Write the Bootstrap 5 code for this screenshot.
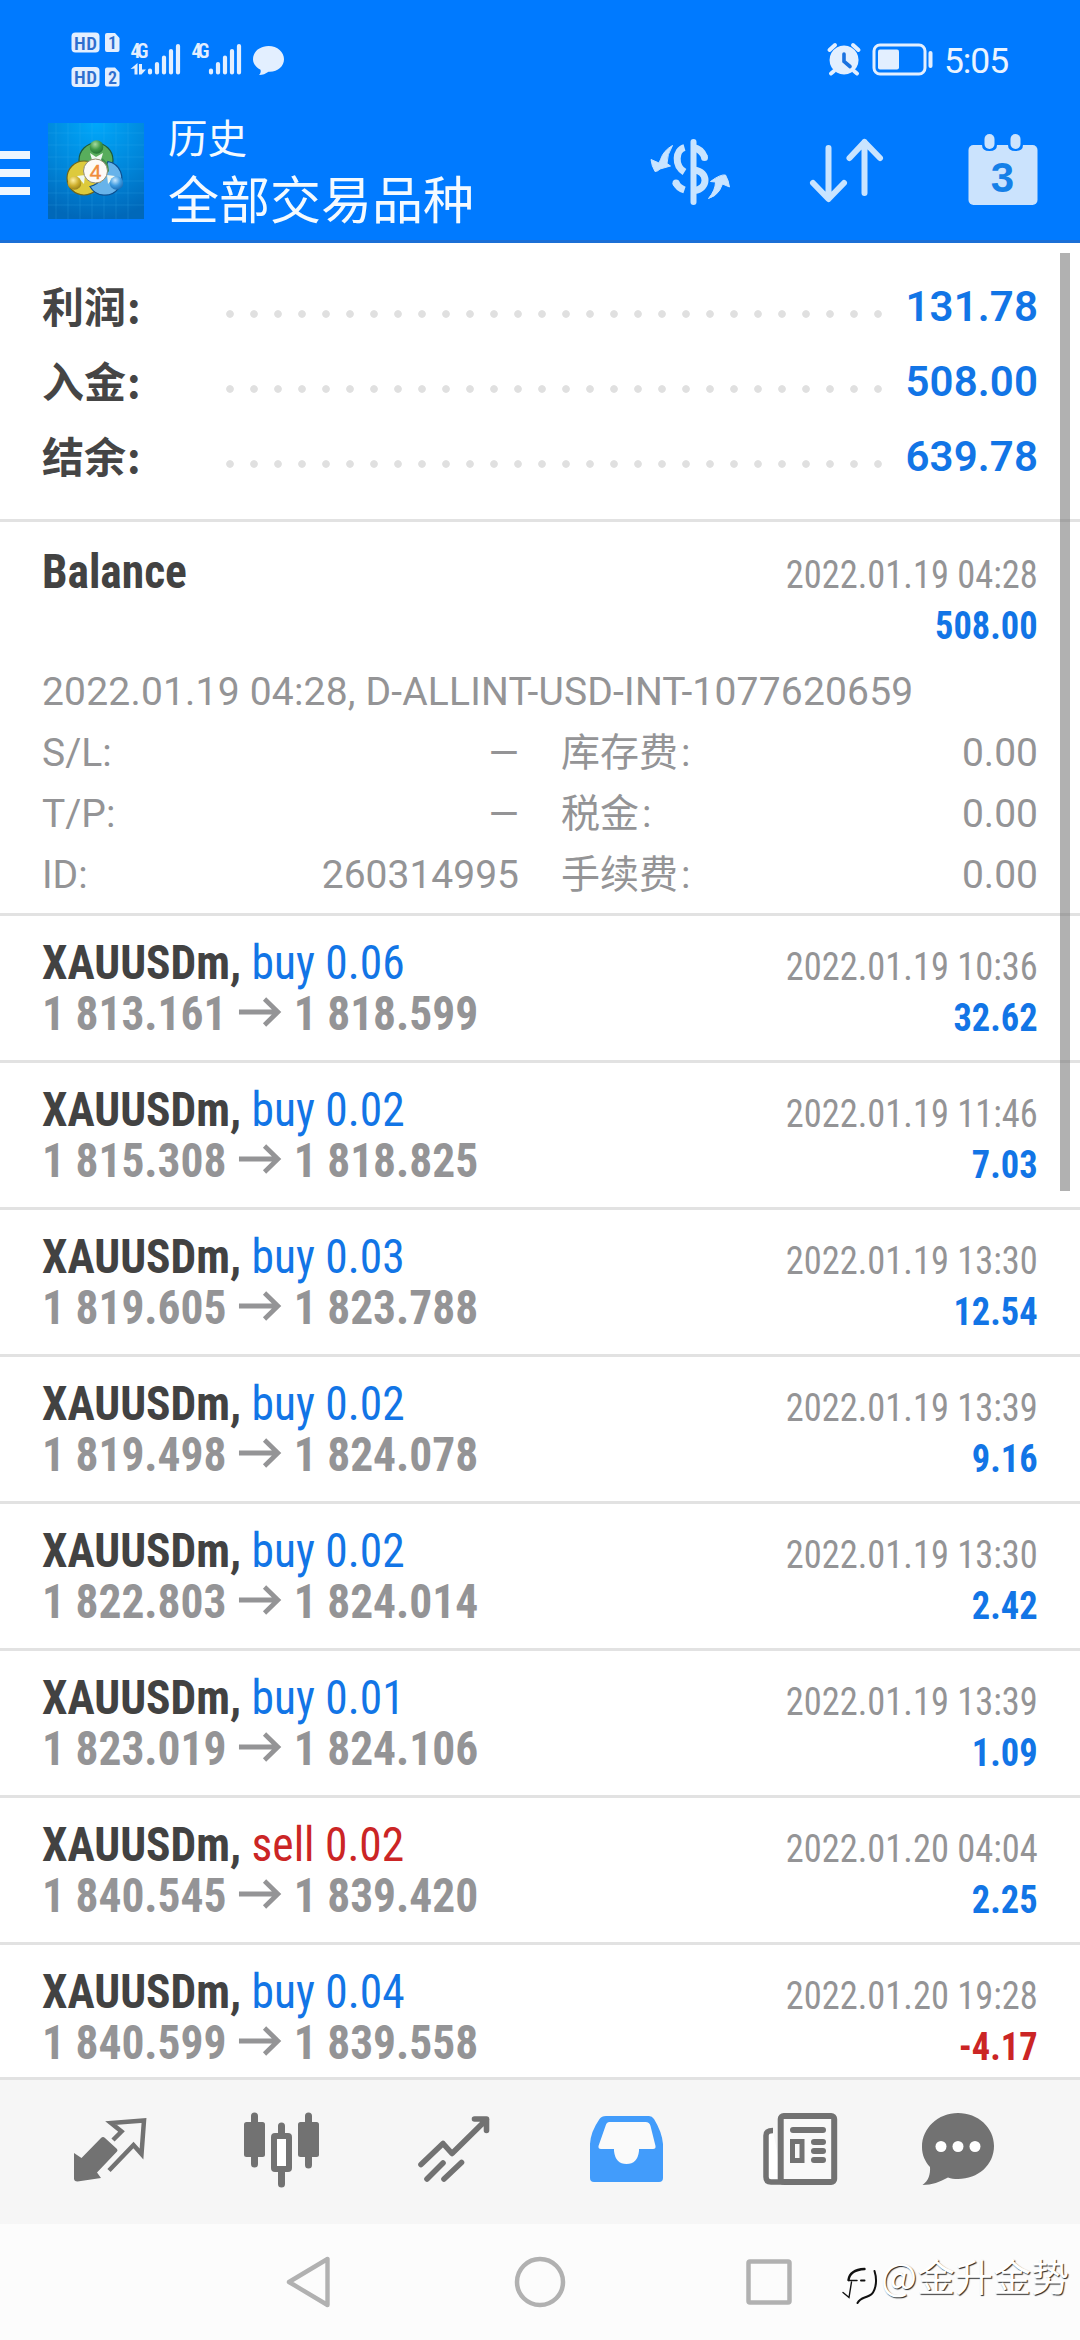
<!DOCTYPE html>
<html lang="zh-CN">
<head>
<meta charset="utf-8">
<meta name="viewport" content="width=device-width, initial-scale=1">
<title>历史</title>
<link href="https://cdn.jsdelivr.net/npm/bootstrap@5.3.0/dist/css/bootstrap.min.css" rel="stylesheet">
<style>
  body { font-family: Roboto, "Noto Sans CJK SC", sans-serif; color: #424242; background: #fff; }
  .screen { width: 1080px; height: 2340px; overflow: hidden; position: relative; }
  svg { display: block; overflow: visible; flex: none; }

  .top-area { background: #007aff; border-bottom: 3px solid #1b6fd6; height: 243px; }
  .status-row { height: 90px; padding: 0 72px 0 70px; }
  .clock-text { font-size: 35.5px; padding-top: 16px; height: 90px; line-height: 90px; letter-spacing: -1.1px; color: #eaf4ff; }
  .app-row { height: 150px; }
  .titles { font-family: "Noto Sans CJK SC", sans-serif; padding: 21px 0 0 24px; color: #f4faff; }
  .title-a { font-size: 39.5px; line-height: 50px; }
  .title-b { font-size: 51px; line-height: 72px; }
  .tools { padding-right: 42px; }

  .history { overflow: hidden; }
  .rule { border-bottom: 3px solid #e2e2e2; }
  .totals { height: 279px; padding: 26px 42px 0; }
  .total-line { height: 75px; }
  .total-label { width: 176px; font: 700 42px/71px "Noto Sans CJK SC", sans-serif; color: #454545; }
  .colon { margin-left: 3px; }
  .total-label .colon { margin-left: 1px; }
  .leader { width: 672px; height: 8px; margin-top: 41px; background: radial-gradient(circle at 12px 4px, #e0e0e0 3.4px, transparent 4.2px) 0 0 / 24px 8px repeat-x; }
  .total-value { font-size: 42px; line-height: 75px; font-weight: 600; letter-spacing: .1px; }
  .up { color: #1275e6; }
  .down { color: #cb2525; }
  .dim { color: #949496; }

  .cond { font-family: "Roboto Condensed", Roboto, sans-serif; white-space: nowrap; }
  .deal { height: 147px; padding: 22.3px 42px 0; }
  .from-left { transform: scaleX(.947); transform-origin: left; font-size: 48px; line-height: 50.5px; }
  .from-right { transform: scaleX(.934); transform-origin: right; font-size: 39px; line-height: 51px; margin-top: 3.4px; }
  .arrow-mark { display: inline-block; margin: -6px 14px 6px 13px; }

  .balance { height: 394px; padding: 24.6px 42px 0; }
  .facts { font-size: 39px; line-height: 61px; padding-top: 10px; white-space: nowrap; }
  .fact-left { width: 477px; }
  .fact-right { width: 477px; }
  .note-line { letter-spacing: .19px; }

  .tabs { height: 147px; background: #f6f6f6; border-top: 3px solid #e2e2e2; padding-left: 71px; gap: 99px; }
  .tab-last { margin-left: -16px; }
  .sysnav { height: 116px; background: #fcfcfc; padding-left: 285px; gap: 180px; }
  .thumb { position: absolute; left: 1060px; top: 253px; width: 10px; height: 938px; background: rgba(110,110,110,.54); }
  .sign { position: absolute; left: 842px; top: 2253px; color: #fff; font: 400 38px/44px "Noto Sans CJK SC", sans-serif; text-shadow: 1px 1px 1px #222; white-space: nowrap; }
</style>
</head>
<body>
<div class="screen d-flex flex-column">
  <header class="top-area flex-shrink-0">
    <div class="status-row d-flex justify-content-between">
      <svg width="216" height="90" viewBox="70 0 216 90" fill="#e3efff" font-family="Roboto Condensed">
        <rect x="71.500" y="32.500" width="28" height="20" rx="4"/>
        <rect x="71.500" y="67" width="28" height="20" rx="4"/>
        <path d="M107 33h8l4.500 5v12q0 2-2 2h-10.500q-2 0-2-2v-15q0-2 2-2z M107 67.500h8l4.500 5v12q0 2-2 2h-10.500q-2 0-2-2v-15q0-2 2-2z"/>
        <g fill="#2f6fcf" font-weight="600" font-size="19"><text x="74" y="49.500" textLength="23">HD</text><text x="74" y="84" textLength="23">HD</text><text x="108" y="49" font-size="18">1</text><text x="108" y="83.500" font-size="18">2</text></g>
        <g font-weight="600" font-size="20"><text x="130.500" y="57.500" textLength="18">4G</text><text x="191.500" y="57.500" textLength="18">4G</text></g>
        <path d="M130.500 69l7-6v11.500h-3v-6zM139 64v10.500h2.500l4.500-5h-4v-5.500z"/>
        <g stroke="#e3efff" stroke-width="4.200" stroke-linecap="round">
          <path d="M150 70.500v2M157 64v8.500M164 57.500v15M171 51v21.500M178 46v26.500M211 70.500v2M218 64v8.500M225 57.500v15M232 51v21.500M239 46v26.500"/>
        </g>
        <path d="M268.500 46c9 0 15.500 6 15.500 13.300 0 7.200-6.500 13-15.500 12.400-3 2-6 3.400-9.500 3.300 1.500-1.500 2-3.300 1.500-5.200-4.500-2.500-7.500-6-7.500-10.500 0-7.300 6.500-13.300 15.500-13.300z"/>
      </svg>
      <div class="d-flex">
        <svg width="118" height="90" viewBox="825 0 118 90" fill="#e3efff">
          <path d="M843 45.500a14.500 14.500 0 1 0 .1 0z"/>
          <path d="M828.500 50l5.500-5M857.500 50l-5.500-5M833 71l-3 2.500M853 71l3 2.500" stroke="#e3efff" stroke-width="4" stroke-linecap="round"/>
          <path d="M843 54v7.500l6 5" fill="none" stroke="#1b72e0" stroke-width="3.600" stroke-linecap="round"/>
          <rect x="873" y="45" width="51" height="29" rx="6" fill="none" stroke="#e3efff" stroke-width="3"/>
          <rect x="877" y="49.500" width="21" height="20" rx="2"/>
          <rect x="927.500" y="51" width="4" height="17" rx="2"/>
        </svg>
        <div class="clock-text">5:05</div>
      </div>
    </div>
    <div class="app-row d-flex">
      <svg width="48" height="150" viewBox="0 90 48 150" fill="#eef6ff"><path d="M0 151h30v8H0zM0 169h30v8H0zM0 187h30v8H0z"/></svg>
      <svg width="96" height="150" viewBox="0 -33 96 150">
        <defs>
          <radialGradient id="sky" cx=".5" cy="0" r="1"><stop offset="0" stop-color="#00a8fb"/><stop offset=".6" stop-color="#0084d8"/><stop offset="1" stop-color="#0068b9"/></radialGradient>
          <radialGradient id="gr" cx=".4" cy=".3" r=".8"><stop offset="0" stop-color="#a5dba0"/><stop offset=".5" stop-color="#3f9a48"/><stop offset="1" stop-color="#1e6a30"/></radialGradient>
          <radialGradient id="ye" cx=".4" cy=".3" r=".8"><stop offset="0" stop-color="#fff0a0"/><stop offset=".5" stop-color="#cfb02e"/><stop offset="1" stop-color="#8a7415"/></radialGradient>
          <radialGradient id="bl" cx=".4" cy=".3" r=".8"><stop offset="0" stop-color="#c8e8ff"/><stop offset=".5" stop-color="#3f9be0"/><stop offset="1" stop-color="#1260a8"/></radialGradient>
        </defs>
        <rect width="96" height="96" fill="url(#sky)"/>
        <path d="M8 0v96M20 0v96M32 0v96M44 0v96M56 0v96M68 0v96M80 0v96M0 10h96M0 22h96M0 34h96M0 46h96M0 58h96M0 70h96M0 82h96" stroke="#3cb6f5" stroke-opacity=".2" stroke-width="1"/>
        <g stroke-width="1.200">
          <circle cx="48" cy="37" r="17" fill="#58ad5c" stroke="#1c5a3a"/>
          <circle cx="36" cy="55" r="17" fill="#ddca3c" stroke="#6c641c"/>
          <path d="M60 38.500a17 17 0 1 1-18 25q8-2 11-8z" fill="#67b3ea" stroke="#0d4f90"/>
          <path d="M52 34q9 4 9 14l-9 12z" fill="#3d8f4c" stroke="none"/>
        </g>
        <path d="M42 30l6 4 7-4-2 7h-9zM29 53l8-1-1 9zM67 53l-8-1 1 9z" fill="#eef8f0"/>
        <circle cx="48.500" cy="24" r="6.800" fill="url(#gr)"/><circle cx="26.500" cy="60" r="6.800" fill="url(#ye)"/><circle cx="68.500" cy="60" r="6.800" fill="url(#bl)"/>
        <circle cx="47.500" cy="48" r="12" fill="#fdfaf6" stroke="#8f8c70" stroke-width="1"/>
        <text x="47.500" y="55.500" text-anchor="middle" font-family="Liberation Sans" font-size="21" fill="#f08c3c" stroke="#f08c3c" stroke-width=".5">4</text>
      </svg>
      <div class="titles flex-grow-1"><div class="title-a">历史</div><div class="title-b">全部交易品种</div></div>
      <div class="tools d-flex">
        <svg width="160" height="150" viewBox="647.500 90 160 150" fill="#c9e4ff">
          <path d="M693 142v60" stroke="#c9e4ff" stroke-width="6" stroke-linecap="round"/>
          <g fill="none" stroke="#c9e4ff" stroke-width="7">
            <path d="M684 147.500c-9 2.500-10.500 18 0 24.500M684 190c-4.500-1.500-7.500-4.500-9-8"/><path d="M675.500 183v.1M704 157.500v.1" stroke-linecap="round"/>
            <path d="M693 147.500c5 1 9 4.500 11 9.500M694 170c14 2 14 18.500 0 20.500"/>
          </g>
          <path d="M672 145.500q-9 5-12 14l-1.500 3.500-8-3.500q.5 6 4 12 2.500 0 5-2.500l10.500-3-3.500-2.500q0-9 5.500-18z" stroke="#c9e4ff"/>
          <path d="M708 198.500q7-2 11-8l3-6.500 7 3q-1-7-4-12-5-1-15 6.500l5 .5q0 8-7 16.500z" stroke="#c9e4ff"/>
        </svg>
        <svg width="160" height="150" viewBox="807.500 90 160 150" fill="none" stroke="#c9e4ff" stroke-width="6" stroke-linecap="round" stroke-linejoin="round">
          <path d="M828 148v50M812.500 183l15.500 16 15.500-16M864 193v-51M849 158l15-16 15.500 16"/>
        </svg>
        <svg width="70" height="150" viewBox="967.500 90 70 150">
          <rect x="968" y="145" width="69" height="60" rx="5" fill="#cbe3fd"/>
          <path d="M981.500 144v1q0 6 7.500 6t7.500-6v-1zM1007.500 144v1q0 6 7.500 6t7.500-6v-1z" fill="#007aff"/>
          <rect x="984" y="134" width="10" height="15" rx="5" fill="#cbe3fd"/><rect x="1010" y="134" width="10" height="15" rx="5" fill="#cbe3fd"/>
          <text x="1002" y="192" text-anchor="middle" font-family="Liberation Sans" font-weight="700" font-size="42" fill="#1580e8">3</text>
        </svg>
      </div>
    </div>
  </header>

  <main class="history flex-grow-1">
    <section class="totals rule">
      <div class="total-line d-flex align-items-start"><div class="total-label">利润<span class="colon">:</span></div><div class="leader"></div><div class="total-value up ms-auto">131.78</div></div>
      <div class="total-line d-flex align-items-start"><div class="total-label">入金<span class="colon">:</span></div><div class="leader"></div><div class="total-value up ms-auto">508.00</div></div>
      <div class="total-line d-flex align-items-start"><div class="total-label">结余<span class="colon">:</span></div><div class="leader"></div><div class="total-value up ms-auto">639.78</div></div>
    </section>

    <section class="balance rule">
      <div class="d-flex justify-content-between">
        <div class="cond from-left fw-bold">Balance</div>
        <div class="cond from-right text-end"><div class="dim">2022.01.19 04:28</div><div class="fw-bold up">508.00</div></div>
      </div>
      <div class="facts dim">
        <div class="note-line">2022.01.19 04:28, D-ALLINT-USD-INT-1077620659</div>
        <div class="d-flex justify-content-between"><div class="fact-left d-flex justify-content-between"><span>S/L:</span><span>—</span></div><div class="fact-right d-flex justify-content-between"><span>库存费<span class="colon">:</span></span><span>0.00</span></div></div>
        <div class="d-flex justify-content-between"><div class="fact-left d-flex justify-content-between"><span>T/P:</span><span>—</span></div><div class="fact-right d-flex justify-content-between"><span>税金<span class="colon">:</span></span><span>0.00</span></div></div>
        <div class="d-flex justify-content-between"><div class="fact-left d-flex justify-content-between"><span>ID:</span><span>260314995</span></div><div class="fact-right d-flex justify-content-between"><span>手续费<span class="colon">:</span></span><span>0.00</span></div></div>
      </div>
    </section>

    <div id="deals"></div>
  </main>

  <nav class="tabs d-flex align-items-center flex-shrink-0">
    <svg width="74" height="84" viewBox="71 2110 74 84" fill="#727272">
      <path d="M74 2153l7.500 5 19.500-20q2-2 4 0l12 11q1 1.500 0 2.500l-20 21 4 5.500-23.500 3.500q-3.500 0-3.500-3z"/>
      <path d="M113 2140l8.500-8.500-10.500-8.500 33-2.500-2.500 33.500-8-9-24.500 25.500" fill="none" stroke="#727272" stroke-width="4.500"/>
    </svg>
    <svg width="74" height="84" viewBox="244 2110 74 84" fill="#727272" stroke="#727272" stroke-linecap="round">
      <path d="M254.500 2116v48M308.500 2116v49M281.500 2126v8M281.500 2172v12" stroke-width="7"/>
      <rect x="244" y="2122" width="21" height="35" rx="2.500" stroke="none"/><rect x="298" y="2122" width="21" height="35" rx="2.500" stroke="none"/>
      <rect x="274" y="2136" width="15" height="33" rx="1" fill="#fff" stroke-width="6"/>
    </svg>
    <svg width="74" height="84" viewBox="416.500 2110 74 84" fill="none" stroke="#727272" stroke-width="5.600" stroke-linecap="round" stroke-linejoin="round">
      <path d="M420.500 2164.500l22-21 9 10 34.500-34M474 2119h12v11.500"/>
      <path d="M426.500 2179l16-16M443.500 2179l17.500-16.500"/>
    </svg>
    <svg width="74" height="84" viewBox="590 2110 74 84">
      <path d="M606 2116h43q3 0 5 3 8 13 9 25v34q0 4-4 4h-65q-4 0-4-4v-34q.500-12 9.500-25 2-3 6.500-3z" fill="#429cfb"/>
      <path d="M609.500 2122h36q4 0 5 4l5 20q.500 3-2.500 3h-14v2q-1.500 13-12.500 13t-12.500-13v-2h-13q-3 0-2.500-3l7-20q1-4 4-4z" fill="#fafafa"/>
    </svg>
    <svg width="74" height="84" viewBox="763 2110 74 84" fill="none" stroke="#727272" stroke-width="5.500">
      <path d="M773 2130.500q-7 0-7 5v41.500q0 5 5 5h12" fill="#fff"/>
      <rect x="780.700" y="2116" width="53.500" height="66" rx="3" fill="#f9f9f9" stroke-width="6"/>
      <path d="M793 2130h30M814 2142h9M814 2151h9M814 2160h9" stroke-linecap="round" stroke-width="6"/>
      <rect x="792.500" y="2141.500" width="9.500" height="19" stroke-width="5"/>
    </svg>
    <svg class="tab-last" width="74" height="84" viewBox="920 2110 74 84">
      <path d="M958 2113c20 0 36 14.500 36 33 0 19-16 33-36 33-4 0-7-.5-10-1.500-8 4.500-16 7.500-25.500 7.500 6-4 8-11 7.500-18-5-5.500-8-12-8-20 0-19 16-34 36-34z" fill="#727272"/>
      <g fill="#fff"><circle cx="941" cy="2146.500" r="5.500"/><circle cx="958" cy="2146.500" r="5.500"/><circle cx="975" cy="2146.500" r="5.500"/></g>
    </svg>
  </nav>
  <nav class="sysnav d-flex align-items-center flex-shrink-0">
    <svg width="50" height="116" viewBox="285 2224 50 116" fill="none" stroke="#b1b1b1" stroke-width="4.400" stroke-linejoin="round"><path d="M289 2282l38.500-23v46z"/></svg>
    <svg width="50" height="116" viewBox="515 2224 50 116" fill="none" stroke="#b1b1b1" stroke-width="4.500"><circle cx="540" cy="2282" r="23"/></svg>
    <svg width="50" height="116" viewBox="745 2224 50 116" fill="none" stroke="#b1b1b1" stroke-width="4.500"><rect x="748.500" y="2261.500" width="41" height="41" rx="1.500"/></svg>
  </nav>

  <div class="thumb"></div>
  <div class="sign d-flex align-items-start">
    <svg width="39" height="52" viewBox="842 2252 39 52" fill="none" stroke="#111" stroke-linecap="round">
      <path d="M848.500 2279c1-7 6-10.500 16-11" stroke-width="2.400"/><path d="M848.500 2279.500h8.500" stroke-width="1.500"/><path d="M861 2279.500h3.500" stroke-width="2"/>
      <path d="M851.500 2281l-2.500 15.500-6-5" stroke-width="1.400"/>
      <path d="M874.500 2270c3.500 11 .5 22-5 24.500-6 3-9 2-12 7.500" stroke-width="2"/>
    </svg>
    <div>@金升金势</div>
  </div>
</div>
<script>
  const deals = [
    ["buy 0.06", "1 813.161", "1 818.599", "2022.01.19 10:36", "32.62"],
    ["buy 0.02", "1 815.308", "1 818.825", "2022.01.19 11:46", "7.03"],
    ["buy 0.03", "1 819.605", "1 823.788", "2022.01.19 13:30", "12.54"],
    ["buy 0.02", "1 819.498", "1 824.078", "2022.01.19 13:39", "9.16"],
    ["buy 0.02", "1 822.803", "1 824.014", "2022.01.19 13:30", "2.42"],
    ["buy 0.01", "1 823.019", "1 824.106", "2022.01.19 13:39", "1.09"],
    ["sell 0.02", "1 840.545", "1 839.420", "2022.01.20 04:04", "2.25"],
    ["buy 0.04", "1 840.599", "1 839.558", "2022.01.20 19:28", "-4.17"]
  ];
  const arrow = '<svg class="arrow-mark" width="44" height="30" viewBox="0 0 44 30" fill="none" stroke="#949496" stroke-width="5"><path d="M0 16h42M27 3l14 13-14 13"/></svg>';
  document.getElementById("deals").innerHTML = deals.map(([side, open, close, time, profit]) => `
    <div class="deal rule d-flex justify-content-between">
      <div class="cond from-left fw-bold">
        <div>XAUUSDm, <span class="fw-normal ${side[0] === "s" ? "down" : "up"}">${side}</span></div>
        <div class="dim">${open}${arrow}${close}</div>
      </div>
      <div class="cond from-right text-end">
        <div class="dim">${time}</div>
        <div class="fw-bold ${profit[0] === "-" ? "down" : "up"}">${profit}</div>
      </div>
    </div>`).join("");
</script>
<script src="https://cdn.jsdelivr.net/npm/bootstrap@5.3.0/dist/js/bootstrap.bundle.min.js"></script>
</body>
</html>
